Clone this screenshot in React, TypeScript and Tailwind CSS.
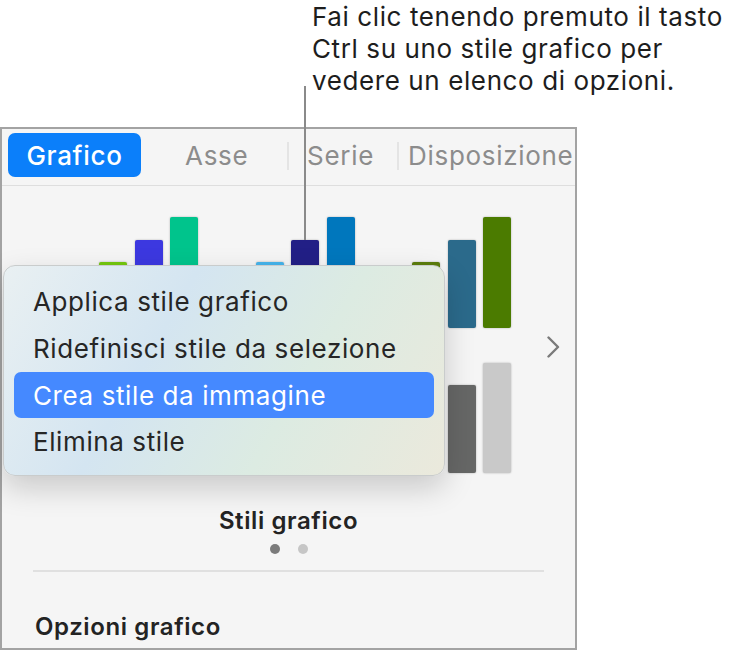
import React from "react";

const Bar = ({ h, color }: { h: number; color: string }) => (
  <div
    className="w-[28px] rounded-[2px] shadow-[0_0_2px_rgba(0,0,0,0.3)]"
    style={{ height: h, backgroundColor: color }}
  />
);

const Thumb = ({ colors, tall }: { colors: string[]; tall: number }) => (
  <div className="flex w-[99px] items-end gap-[7.5px]">
    <Bar h={66} color={colors[0]} />
    <Bar h={88} color={colors[1]} />
    <Bar h={tall} color={colors[2]} />
  </div>
);

export default function App() {
  const items = [
    "Applica stile grafico",
    "Ridefinisci stile da selezione",
    "Crea stile da immagine",
    "Elimina stile",
  ];
  return (
    <div className="relative h-[651px] w-[740px] overflow-hidden bg-white font-['Inter',sans-serif] text-[#1d1d1d]">
      {/* callout */}
      <div className="h-[127px] pl-[312px] pt-[1px] text-[26px] leading-[32px] tracking-[0.6px]">
        <div>Fai clic tenendo premuto il tasto</div>
        <div>Ctrl su uno stile grafico per</div>
        <div>vedere un elenco di opzioni.</div>
      </div>
      <div className="absolute left-[304px] top-[86px] z-10 h-[154px] w-[2px] bg-[#8a8a8a]" />

      {/* panel */}
      <div className="relative flex h-[523px] w-[577px] flex-col border-2 border-[#a3a3a3] bg-[#f5f5f5]">
        {/* tabs */}
        <div className="flex h-[57px] items-start border-b border-[#dedede] pt-[4px] text-[26px] tracking-[0.7px]">
          <div className="ml-[6px] flex h-[44px] w-[133px] items-center justify-center rounded-[7px] bg-[#0b7ffa] font-medium text-white">
            Grafico
          </div>
          <div className="flex h-[44px] w-[146px] items-center pl-[44px] text-[#8c8c8c]">Asse</div>
          <div className="mt-[9px] h-[28px] w-[2px] bg-[#e4e4e4]" />
          <div className="flex h-[44px] w-[108px] items-center pl-[18px] text-[#8c8c8c]">Serie</div>
          <div className="mt-[9px] h-[28px] w-[2px] bg-[#e4e4e4]" />
          <div className="flex h-[44px] items-center whitespace-nowrap pl-[9px] text-[#8c8c8c]">Disposizione</div>
        </div>

        {/* chart styles */}
        <div className="flex items-center pl-[97px] pt-[31px]">
          <div className="flex flex-col gap-[35px]">
            <div className="flex gap-[57.5px]">
              <Thumb tall={111} colors={["#74c80e", "#3c38e0", "#00c48c"]} />
              <Thumb tall={111} colors={["#45b4ec", "#221f86", "#0077bd"]} />
              <Thumb tall={111} colors={["#5b7d0c", "#2b6a8b", "#4b7b00"]} />
            </div>
            <div className="flex gap-[57.5px]">
              <Thumb tall={110} colors={["#b9c4cf", "#8fa3b5", "#d7dde4"]} />
              <Thumb tall={110} colors={["#c8b8a8", "#a89078", "#e0d4c8"]} />
              <Thumb tall={110} colors={["#9a9a9a", "#666766", "#c9c9c9"]} />
            </div>
          </div>
          <svg className="ml-[35px] mt-[4px]" width="15" height="22" viewBox="0 0 15 22" fill="none">
            <path d="M2.5 1.5 L12 11 L2.5 20.5" stroke="#7a7a7a" strokeWidth="2.4" strokeLinecap="round" strokeLinejoin="round" />
          </svg>
        </div>

        {/* footer */}
        <div className="mt-[35px] text-center text-[24px] font-semibold leading-[26px] tracking-[0.6px] text-[#232323]">
          Stili grafico
        </div>
        <div className="mt-[10px] flex justify-center gap-[18px] pl-[1px]">
          <div className="h-[10px] w-[10px] rounded-full bg-[#7b7b7b]" />
          <div className="h-[10px] w-[10px] rounded-full bg-[#c6c6c6]" />
        </div>
        <div className="mx-[31px] mt-[16px] h-[2px] bg-[#e0e0e0]" />
        <div className="ml-[33px] mt-[42px] text-[24px] font-semibold leading-[26px] tracking-[0.6px] text-[#232323]">
          Opzioni grafico
        </div>

        {/* context menu */}
        <div className="absolute left-[1px] top-[136px] z-20 flex h-[211px] w-[442px] flex-col rounded-[12px] border border-[#c9cccc] bg-[linear-gradient(120deg,#e9f0f2_0%,#d4e5f1_35%,#dcebe2_65%,#ebe9dc_100%)] px-[10px] pt-[12px] text-[26px] tracking-[0.6px] shadow-[0_12px_30px_rgba(0,0,0,0.18)]">
          {items.map((t, i) => (
            <div
              key={t}
              className={
                i === 2
                  ? "flex h-[46px] items-center rounded-[7px] bg-[#4589ff] pl-[19px] text-white"
                  : "flex h-[47px] items-center pl-[19px] text-[#262626]"
              }
            >
              {t}
            </div>
          ))}
        </div>
      </div>
    </div>
  );
}
